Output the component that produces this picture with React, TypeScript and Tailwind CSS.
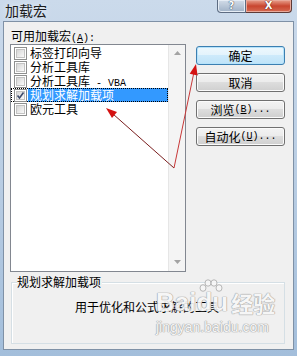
import React from "react";

const FONT = "font-['Noto_Sans_CJK_SC','Noto_Sans',sans-serif]";

function Checkbox({ checked }: { checked?: boolean }) {
  return (
    <span className="relative w-[13px] h-[13px] shrink-0 border border-[#8e8f8f] bg-white p-[1px] flex">
      <span className="flex-1 border border-[#c3c3c3] bg-gradient-to-br from-[#d6d6d6] to-[#f9f9f9]" />
      {checked && (
        <svg className="absolute left-[1px] top-[1px]" width="9" height="9" viewBox="0 0 9 9">
          <path d="M1.5 4.5 L3.5 7 L7.5 1.5" fill="none" stroke="#3d4a6b" strokeWidth="1.6" />
        </svg>
      )}
    </span>
  );
}

function Row({ text, selected, checked }: { text: React.ReactNode; selected?: boolean; checked?: boolean }) {
  return (
    <div
      className={
        "h-[14px] flex items-center " +
        (selected ? "outline outline-1 outline-dotted outline-black -outline-offset-1" : "")
      }
    >
      <span className="ml-[3px]">
        <Checkbox checked={checked} />
      </span>
      <span
        className={
          "flex-1 ml-[1px] pl-[2px] h-[14px] leading-[14px] whitespace-nowrap " +
          (selected ? "bg-[#3399ff] text-white" : "")
        }
      >
        {text}
      </span>
    </div>
  );
}

function Btn({ children, def }: { children: React.ReactNode; def?: boolean }) {
  return (
    <div
      className={
        "h-[19px] rounded-[3px] border flex items-center justify-center leading-[17px] text-[12px] " +
        (def
          ? "border-[#3c7fb1] shadow-[inset_0_0_0_1px_#b6e3fb] bg-[linear-gradient(to_bottom,#eef8fd_0%,#e2f3fc_50%,#cdeafb_50%,#bfe3f8_100%)]"
          : "border-[#707070] shadow-[inset_0_0_0_1px_#fbfbfb] bg-[linear-gradient(to_bottom,#f3f3f3_0%,#ebebeb_50%,#dddddd_50%,#cfcfcf_100%)]")
      }
    >
      {children}
    </div>
  );
}

const mono = "font-['Liberation_Mono',monospace] text-[10px]";

export default function App() {
  return (
    <div
      className={
        "relative w-[297px] h-[356px] overflow-hidden flex flex-col text-[12px] text-black bg-gradient-to-b from-[#cbdaeb] via-[#b9cde3] to-[#a3bedb] " +
        FONT
      }
    >
      {/* title bar */}
      <div className="h-[21px] flex items-start justify-between pl-[5px] pr-[5px] shrink-0">
        <span className="text-[14px] leading-[20px] text-[#1b1b1b] [text-shadow:0_0_6px_#eef4fb]">加载宏</span>
        <div className="flex h-[13px]">
          <div className="w-[29px] h-[13px] border border-t-0 border-[#5d6c82] rounded-bl-[4px] bg-gradient-to-b from-[#d3dde9] to-[#9fb1c6] flex items-center justify-center shadow-[inset_0_0_0_1px_#e6edf5]">
            <span className="text-[10px] leading-[12px] font-bold text-white [text-shadow:0_0_1px_#2c3a4d,0_0_1px_#2c3a4d] font-['DejaVu_Sans',sans-serif]">?</span>
          </div>
          <div className="w-[46px] h-[13px] border border-t-0 border-l-0 border-[#5d3a36] rounded-br-[4px] bg-gradient-to-b from-[#e7a08e] via-[#c8452f] to-[#d56a52] flex items-center justify-center shadow-[inset_0_0_0_1px_#e9a99a]">
            <span className="text-[10px] leading-[12px] font-bold text-white [text-shadow:0_0_1px_#5a1a10,0_0_1px_#5a1a10] font-['DejaVu_Sans',sans-serif]">X</span>
          </div>
        </div>
      </div>

      {/* body */}
      <div className="mx-[3px] mb-[6px] flex-1 border border-[#7f91a6] bg-[#f0f0f0] pl-[6px] pt-[5px] pr-[7px] flex flex-col">
        <div className="flex items-start">
          <div className="w-[176px] flex flex-col">
            <div className="h-[17px] leading-[17px] pl-[1px] whitespace-nowrap">
              可用加载宏<span className={mono}>(<span className="underline">A</span>):</span>
            </div>
            <div className="h-[228px] border border-[#828790] bg-white flex">
              <div className="flex-1 pt-[1px] flex flex-col">
                <Row text="标签打印向导" />
                <Row text="分析工具库" />
                <Row
                  text={
                    <>
                      分析工具库<span className={mono}> - VBA</span>
                    </>
                  }
                />
                <Row text="规划求解加载项" selected checked />
                <Row text="欧元工具" />
              </div>
              <div className="w-[17px] bg-[#f4f4f4] border-l border-[#e6e6e6] flex flex-col justify-between items-center py-[5px]">
                <svg width="7" height="4" viewBox="0 0 7 4" className="mt-[1px]">
                  <path d="M0 4 L3.5 0 L7 4 Z" fill="#a3a3a3" />
                </svg>
                <svg width="7" height="4" viewBox="0 0 7 4" className="mb-[2px]">
                  <path d="M0 0 L3.5 4 L7 0 Z" fill="#a3a3a3" />
                </svg>
              </div>
            </div>
          </div>
          <div className="ml-[10px] mt-[19px] w-[89px] flex flex-col gap-[8px]">
            <Btn def>确定</Btn>
            <Btn>取消</Btn>
            <Btn>
              浏览<span className={mono}>(<span className="underline">B</span>)...</span>
            </Btn>
            <Btn>
              自动化<span className={mono}>(<span className="underline">U</span>)...</span>
            </Btn>
          </div>
        </div>

        {/* group box */}
        <div className="relative mt-[10px] ml-[1px] w-[274px] h-[62px] border border-[#d5dfe5] shadow-[inset_1px_1px_0_#ffffff] pl-[63px] pt-[17px]">
          <span className="absolute -top-[8px] left-[5px] bg-[#f0f0f0] leading-[14px] pr-[1px]">规划求解加载项</span>
          <div className="leading-[14px] whitespace-nowrap">用于优化和公式求解的工具</div>
        </div>
      </div>

      {/* watermark */}
      <div className="absolute left-[156px] top-[284px] pointer-events-none select-none flex flex-col items-start whitespace-nowrap opacity-90">
        <div className="relative flex items-end h-[32px] whitespace-nowrap">
          <span className="font-['Liberation_Sans',sans-serif] font-bold text-[26px] leading-[28px] text-[#f7f7f7] [text-shadow:0_0_1px_#9a9a9a,0_0_1px_#9a9a9a,0_0_1px_#9a9a9a]">
            Bai
          </span>
          <span className="relative font-['Liberation_Sans',sans-serif] font-bold text-[26px] leading-[28px] text-[#f7f7f7] [text-shadow:0_0_1px_#9a9a9a,0_0_1px_#9a9a9a,0_0_1px_#9a9a9a]">
            du
            <svg className="absolute -top-[9px] left-[2px]" width="26" height="16" viewBox="0 0 26 16">
              <g fill="#f7f7f7" stroke="#a0a0a0" strokeWidth="0.8">
                <ellipse cx="5" cy="9" rx="3" ry="3.3" />
                <ellipse cx="10" cy="4" rx="3" ry="3.2" />
                <ellipse cx="16" cy="4" rx="3" ry="3.2" />
                <ellipse cx="21" cy="9" rx="3" ry="3.3" />
              </g>
            </svg>
          </span>
          <span className={"ml-[3px] font-bold text-[22px] leading-[28px] text-[#f7f7f7] [text-shadow:0_0_1px_#9a9a9a,0_0_1px_#9a9a9a,0_0_1px_#9a9a9a] " + FONT}>
            经验
          </span>
        </div>
        <div className="font-['Liberation_Sans',sans-serif] text-[14px] leading-[16px] mt-[3px] text-[#f7f7f7] [text-shadow:0_0_1px_#9a9a9a,0_0_1px_#9a9a9a,0_0_1px_#9a9a9a]">
          jingyan.baidu.com
        </div>
      </div>

      {/* red arrows annotation */}
      <svg className="absolute left-0 top-0 pointer-events-none" width="297" height="356" viewBox="0 0 297 356">
        <line x1="174" y1="168" x2="113" y2="114" stroke="#7a1e1e" strokeWidth="1" />
        <polygon points="106,108 117,112 112,118" fill="#d41111" />
        <line x1="174" y1="168" x2="194" y2="72" stroke="#c83838" strokeWidth="1" />
        <polygon points="196,64 197.5,75.6 189.7,73.8" fill="#d41111" />
      </svg>
    </div>
  );
}
